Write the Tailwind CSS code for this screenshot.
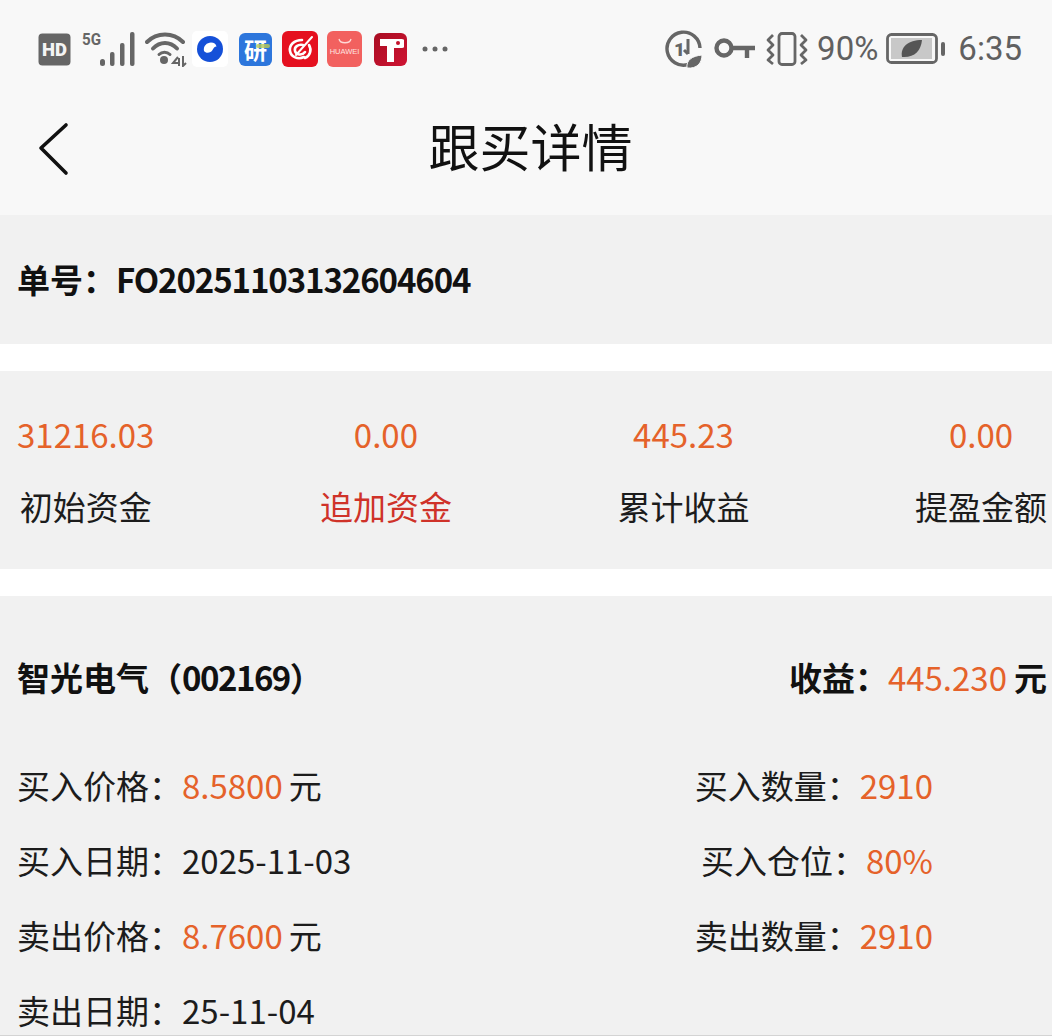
<!DOCTYPE html>
<html lang="zh-CN">
<head>
<meta charset="utf-8">
<script src="https://cdn.jsdelivr.net/npm/@tailwindcss/browser@4"></script>
</head>
<body class="m-0 bg-white">
<div class="w-[1052px] h-[1036px] overflow-hidden font-['Noto_Sans_CJK_SC','Noto_Sans',sans-serif] text-[33px] leading-[44px] text-[#1c1c1c] flex flex-col">
  <div class="bg-[#f8f8f8] h-[215px] shrink-0 flex flex-col">
    <div class="h-[96px] flex items-center justify-between pl-[38px] pr-[29px] pt-[2px] text-[#606060]">
      <div class="flex items-center">
        <svg width="33" height="33" viewBox="0 0 33 33" class="block"><rect x="0.5" y="0.5" width="32" height="32" rx="4" fill="#666"/><text x="16.5" y="23" text-anchor="middle" font-family="Roboto" font-weight="900" font-size="18.5" fill="#f4f4f4">HD</text></svg>
        <svg width="53" height="36" viewBox="0 0 53 36" class="block ml-[11px]"><text x="0" y="14" font-family="Roboto" font-weight="700" font-size="16" fill="#666" textLength="19" lengthAdjust="spacingAndGlyphs">5G</text><g fill="#666"><rect x="18" y="28" width="5" height="7" rx="2.5"/><rect x="28" y="21" width="4.5" height="14" rx="2"/><rect x="38" y="12" width="4.5" height="23" rx="2"/><rect x="48" y="1" width="4.5" height="34" rx="2"/></g></svg>
        <svg width="42" height="36" viewBox="0 0 42 36" class="block ml-[10px]" fill="none" stroke="#666" stroke-width="4" stroke-linecap="round"><path d="M2 11C12 1 28 1 38 11"/><path d="M8 17.500C15 10 25 10 32 17.500"/><circle cx="19" cy="29" r="4" fill="#666" stroke="none"/><path d="M14 23.500C17 20.500 22 20.500 25 23.500" stroke-width="3"/><path d="M33 26l-5 6h6M34 27v8M38 25v10l3-3" stroke-width="2" stroke-linecap="butt"/></svg>
        <div class="w-[36px] h-[36px] ml-[5px] bg-white rounded-[5px] flex items-center justify-center">
          <svg width="26" height="26" viewBox="0 0 26 26"><circle cx="13" cy="13" r="13" fill="#1550d8"/><path d="M7 15C6 10 10 6.500 14 6.500c3 0 5 1.500 5.500 4-2 .2-3 1.500-4 3.500-1.500 3-6.500 4-8.500 1z" fill="#fff"/></svg>
        </div>
        <div class="relative w-[33px] h-[33px] ml-[11px] rounded-[6px] bg-[#2d76dc] flex items-center justify-center text-[23px] leading-none font-bold text-white">研<span class="absolute left-[17px] top-[11px] w-[14px] h-[4px] rounded-[2px] bg-[#b9c957]/80"></span></div>
        <div class="w-[36px] h-[36px] ml-[10px] rounded-[6px] bg-[#e5101f] flex items-center justify-center">
          <svg width="30" height="30" viewBox="0 0 30 30" fill="none" stroke="#fff" stroke-width="2.600" stroke-linecap="round"><path d="M17 6C9 6 4 11 5 17s8 9 14 6"/><path d="M18 11c-5-1-9 2-8 6s7 5 10 1"/><path d="M27 3L11 21" stroke-width="2"/><path d="M24 11c3 5 1 11-4 13"/></svg>
        </div>
        <div class="w-[35px] h-[36px] ml-[9px] rounded-[6px] bg-[#f2615f] flex flex-col items-center justify-start">
          <svg width="14" height="6" viewBox="0 0 14 6" class="mt-[7px]" fill="none" stroke="#ffd9d6" stroke-width="1.300"><path d="M1 1c1 5 11 5 12 0"/></svg>
          <span class="text-[7.500px] leading-[8px] mt-[4px] text-[#ffe4e0] font-['Liberation_Sans',sans-serif]">HUAWEI</span>
        </div>
        <div class="w-[33px] h-[33px] ml-[12px] rounded-[6px] bg-linear-to-br from-[#a80d22] to-[#cf1433] flex items-center justify-center">
          <svg width="26" height="26" viewBox="0 0 26 26"><path d="M2 3h21a2 2 0 0 1 1 9h-8v14H9V10H2z" fill="#fff"/><circle cx="20" cy="7" r="2" fill="#c3122c"/></svg>
        </div>
        <svg width="26" height="6" viewBox="0 0 26 6" class="block ml-[15px]" fill="#666"><circle cx="3" cy="3" r="2.500"/><circle cx="13" cy="3" r="2.500"/><circle cx="23" cy="3" r="2.500"/></svg>
      </div>
      <div class="flex items-center">
        <svg width="37" height="38" viewBox="0 0 37 38" class="block" fill="none" stroke="#666" stroke-width="3.400"><path d="M23 34.500A16.500 16.500 0 1 1 35 18"/><text x="9" y="26" font-family="Roboto" font-weight="900" font-size="19" fill="#666" stroke="none">1</text><path d="M23 9v15M23 24l-4-4" stroke-width="3"/><path d="M22 38c-1-8 5-12 15-13 0 8-5 14-15 13z" fill="#666" stroke="#f8f8f8" stroke-width="1"/></svg>
        <svg width="41" height="22" viewBox="0 0 41 22" class="block ml-[12px]" fill="none" stroke="#666" stroke-width="4.400"><circle cx="10" cy="10" r="7.500"/><path d="M17 10h24M33 10v10"/></svg>
        <svg width="42" height="34" viewBox="0 0 42 34" class="block ml-[11px]" fill="none" stroke="#666" stroke-width="2.800" stroke-linejoin="round"><rect x="13" y="1.500" width="16" height="31" rx="3"/><path d="M7 3L2 8l5 5-5 5 5 5-5 5 5 4"/><path d="M35 3l5 5-5 5 5 5-5 5 5 5-5 4"/></svg>
        <span class="ml-[9px] text-[33px] leading-[40px] font-['Roboto',sans-serif]">90%</span>
        <svg width="60" height="32" viewBox="0 0 60 32" class="block ml-[8px]" fill="none"><rect x="1.500" y="1.500" width="49" height="28" rx="4" stroke="#666" stroke-width="2.800"/><rect x="5" y="5" width="41" height="21" fill="#c8c8c8"/><path d="M16 24c-2-10 6-17 20-17-1 11-8 18-20 17z" fill="#555"/><rect x="55" y="9" width="4" height="14" rx="2" fill="#666"/></svg>
        <span class="ml-[12px] text-[33px] leading-[40px] font-['Roboto',sans-serif] mr-[1px]">6:35</span>
      </div>
    </div>
    <div class="relative h-[119px] flex items-start justify-center pl-[9px]">
      <svg width="34" height="54" viewBox="0 0 34 54" class="absolute left-[37px] top-[26px]" fill="none" stroke="#111" stroke-width="3.600" stroke-linecap="round" stroke-linejoin="round"><path d="M29 3L4 26l25 25"/></svg>
      <div class="text-[51px] leading-[66px] mt-[16px] text-[#111]">跟买详情</div>
    </div>
  </div>

  <div class="bg-[#f1f1f1] h-[129px] shrink-0 flex items-center pl-[17px] font-bold text-[#111] pb-[2px]">单号：<span class="tracking-[-1.100px]">FO20251103132604604</span></div>

  <div class="bg-[#f1f1f1] h-[198px] mt-[27px] shrink-0 flex justify-between pl-[17px] pr-[5px] pt-[41px] text-center">
    <div class="flex flex-col gap-[28px]"><span class="text-[#e5622a]">31216.03</span><span>初始资金</span></div>
    <div class="flex flex-col gap-[28px]"><span class="text-[#e5622a]">0.00</span><span class="text-[#cf3229]">追加资金</span></div>
    <div class="flex flex-col gap-[28px]"><span class="text-[#e5622a]">445.23</span><span>累计收益</span></div>
    <div class="flex flex-col gap-[28px]"><span class="text-[#e5622a]">0.00</span><span>提盈金额</span></div>
  </div>

  <div class="bg-[#f1f1f1] flex-1 mt-[27px] pl-[17px] border-b border-[#d4d4d4]">
    <div class="flex justify-between pr-[5px] pt-[59px] font-bold text-[#111]">
      <span>智光电气（<span class="tracking-[-1.500px]">002169</span>）</span>
      <span>收益：<span class="font-normal text-[#e5622a]">445.230</span><span class="ml-[7px]">元</span></span>
    </div>
    <div class="grid grid-cols-[1fr_auto] pr-[119px] mt-[64px] gap-y-[31px]">
      <div>买入价格：<span class="text-[#e5622a]">8.5800</span><span class="ml-[6px]">元</span></div>
      <div class="text-right">买入数量：<span class="text-[#e5622a]">2910</span></div>
      <div>买入日期：2025-11-03</div>
      <div class="text-right">买入仓位：<span class="text-[#e5622a]">80%</span></div>
      <div>卖出价格：<span class="text-[#e5622a]">8.7600</span><span class="ml-[6px]">元</span></div>
      <div class="text-right">卖出数量：<span class="text-[#e5622a]">2910</span></div>
      <div>卖出日期：25-11-04</div>
    </div>
  </div>
</div>
</body>
</html>
